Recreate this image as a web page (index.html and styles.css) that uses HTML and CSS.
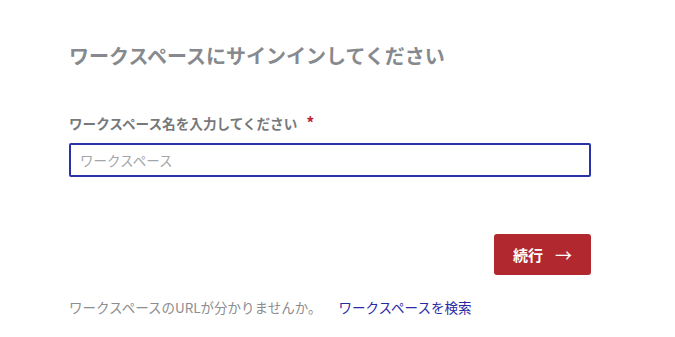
FILE: index.html
```html
<!DOCTYPE html>
<html lang="ja">
<head>
<meta charset="utf-8">
<title>サインイン</title>
<link rel="stylesheet" href="styles.css">
</head>
<body>
<main class="signin">
  <h1 class="title">ワークスペースにサインインしてください</h1>
  <form class="form">
    <label class="label" for="ws">ワークスペース名を入力してください<span class="req">*</span></label>
    <input class="input" id="ws" type="text" placeholder="ワークスペース">
    <div class="actions">
      <button class="btn" type="button">続行<span class="arrow">→</span></button>
    </div>
  </form>
  <p class="help">ワークスペースのURLが分かりませんか。<a class="link" href="#">ワークスペースを検索</a></p>
</main>
</body>
</html>
```
FILE: styles.css
```css
html, body {
  margin: 0;
  background: #fff;
}
body {
  font-family: "Noto Sans CJK JP", "Noto Sans", sans-serif;
}
.signin {
  width: 522px;
  padding: 39px 0 0 69px;
  display: flex;
  flex-direction: column;
}
.title {
  margin: 0;
  font-size: 20px;
  line-height: 34px;
  font-weight: 700;
  color: #86898d;
}
.form {
  display: flex;
  flex-direction: column;
  margin-top: 39px;
}
.label {
  font-size: 13.6px;
  line-height: 20px;
  font-weight: 700;
  color: #76787b;
}
.req {
  color: #c0263a;
  margin-left: 9px;
  font-size: 16px;
}
.input {
  margin-top: 10px;
  box-sizing: border-box;
  height: 34px;
  border: 2px solid #2932a6;
  border-radius: 2px;
  padding: 0 9px;
  font-family: inherit;
  font-size: 13.5px;
  color: #333;
  outline: none;
}
.input::placeholder {
  color: #a3a5a8;
}
.actions {
  display: flex;
  justify-content: flex-end;
  margin-top: 57px;
}
.btn {
  width: 97px;
  height: 41px;
  border: none;
  border-radius: 3px;
  background: #b1282f;
  color: #fff;
  font-family: inherit;
  font-size: 15px;
  font-weight: 700;
  display: flex;
  align-items: center;
  justify-content: center;
  gap: 12px;
  padding: 0;
}
.arrow {
  font-weight: 400;
  font-size: 17px;
}
.help {
  margin: 22px 0 0;
  font-size: 13.5px;
  line-height: 20px;
  color: #8b8d90;
}
.link {
  margin-left: 17px;
  color: #2a2aa6;
  text-decoration: none;
}
```
